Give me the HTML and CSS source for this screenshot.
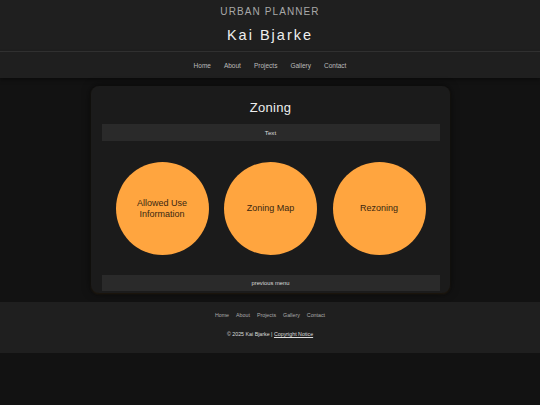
FILE: index.html
```html
<!DOCTYPE html>
<html lang="en">
<head>
<meta charset="utf-8">
<title>Kai Bjarke - Zoning</title>
<link rel="stylesheet" href="styles.css">
</head>
<body>
<header class="site-header">
  <div class="role">URBAN PLANNER</div>
  <h1 class="name">Kai Bjarke</h1>
</header>
<nav class="main-nav">
  <a href="#">Home</a>
  <a href="#">About</a>
  <a href="#">Projects</a>
  <a href="#">Gallery</a>
  <a href="#">Contact</a>
</nav>
<main class="card">
  <h2 class="card-title">Zoning</h2>
  <div class="bar">Text</div>
  <div class="circles">
    <a class="circle" href="#">Allowed Use<br>Information</a>
    <a class="circle" href="#">Zoning Map</a>
    <a class="circle" href="#">Rezoning</a>
  </div>
  <a class="bar back" href="#">previous menu</a>
</main>
<footer class="site-footer">
  <nav class="foot-nav">
    <a href="#">Home</a>
    <a href="#">About</a>
    <a href="#">Projects</a>
    <a href="#">Gallery</a>
    <a href="#">Contact</a>
  </nav>
  <p class="copy">© 2025 Kai Bjarke | <a href="#">Copyright Notice</a></p>
</footer>
</body>
</html>
```
FILE: styles.css
```css
html, body {
  margin: 0;
  padding: 0;
}
body {
  background: #121212;
  font-family: "Liberation Sans", Arial, sans-serif;
  color: #ddd;
}
a {
  text-decoration: none;
  color: inherit;
}
.site-header {
  background: #1f1f1f;
  height: 52px;
  box-sizing: border-box;
  padding-top: 5px;
  border-bottom: 1px solid #333;
  text-align: center;
}
.role {
  font-size: 10px;
  line-height: 14px;
  letter-spacing: 1.1px;
  color: #a8a8a8;
}
.name {
  margin: 7px 0 0;
  font-size: 14.5px;
  line-height: 18px;
  font-weight: normal;
  letter-spacing: 2px;
  color: #eeeeee;
}
.main-nav {
  background: #1f1f1f;
  height: 26px;
  display: flex;
  justify-content: center;
  align-items: center;
  gap: 13px;
  font-size: 6.5px;
  color: #bbbbbb;
  box-shadow: 0 2px 4px rgba(0,0,0,0.4);
}
.card {
  width: 359px;
  box-sizing: border-box;
  margin: 8px auto 9px;
  background: #1b1b1b;
  border-radius: 8px;
  padding: 13px 10px 2px 11px;
  box-shadow: 0 0 8px rgba(0,0,0,0.6), 0 1px 2px rgba(120,80,20,0.25);
}
.card-title {
  margin: 0 0 7px;
  font-size: 13px;
  line-height: 18px;
  font-weight: normal;
  text-align: center;
  color: #eeeeee;
  letter-spacing: 0.3px;
}
.bar {
  display: block;
  background: #2a2a2a;
  height: 17px;
  line-height: 17px;
  font-size: 6.2px;
  text-align: center;
  color: #dddddd;
}
.back {
  height: 16px;
  line-height: 16px;
  font-size: 5.8px;
}
.circles {
  display: flex;
  justify-content: center;
  gap: 15.5px;
  padding: 21px 0 20px;
}
.circle {
  width: 93px;
  height: 93px;
  border-radius: 50%;
  background: #ffa53f;
  display: flex;
  align-items: center;
  justify-content: center;
  text-align: center;
  font-size: 9px;
  line-height: 11px;
  color: #3a2710;
}
.site-footer {
  background: #1f1f1f;
  height: 51px;
  text-align: center;
  padding-top: 10px;
  box-sizing: border-box;
}
.foot-nav {
  display: flex;
  justify-content: center;
  gap: 7px;
  font-size: 5.3px;
  line-height: 7px;
  color: #aaaaaa;
}
.copy {
  margin: 12px 0 0;
  font-size: 5.3px;
  line-height: 7px;
  color: #dddddd;
}
.copy a {
  text-decoration: underline;
}
```
